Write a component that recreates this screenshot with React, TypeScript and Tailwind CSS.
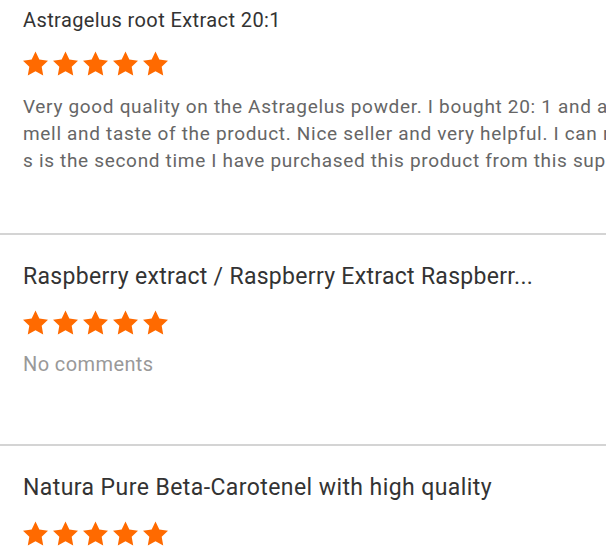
import React from "react";

type Review = {
  id: number;
  title: string;
  titleClass: string;
  lines: string[] | null;
};

const REVIEWS: Review[] = [
  {
    id: 1,
    title: "Astragelus root Extract 20:1",
    titleClass: "text-[20px] leading-[28px] tracking-[0.4px]",
    lines: [
      "Very good quality on the Astragelus powder. I bought 20: 1 and a very nice s",
      "mell and taste of the product. Nice seller and very helpful. I can recommend. Thi",
      "s is the second time I have purchased this product from this supplier.",
    ],
  },
  {
    id: 2,
    title: "Raspberry extract / Raspberry Extract Raspberr...",
    titleClass: "text-[23px] leading-[30px] tracking-[0.3px]",
    lines: null,
  },
  {
    id: 3,
    title: "Natura Pure Beta-Carotenel with high quality",
    titleClass: "text-[23px] leading-[30px] tracking-[0.42px]",
    lines: null,
  },
];

function Star() {
  return (
    <svg viewBox="0 0 24 24" className="h-[25px] w-[25px]" fill="#ff6a00">
      <path d="M12 .587l3.668 7.568 8.332 1.151-6.064 5.828 1.48 8.279L12 19.446l-7.417 3.967 1.481-8.279L0 9.306l8.332-1.151z" />
    </svg>
  );
}

function Stars() {
  return (
    <div className="flex gap-[5px]">
      {[0, 1, 2, 3, 4].map((i) => (
        <Star key={i} />
      ))}
    </div>
  );
}

export default function App() {
  return (
    <div
      className="h-[554px] w-[606px] overflow-hidden bg-white"
      style={{ fontFamily: "Roboto, 'Liberation Sans', sans-serif" }}
    >
      {REVIEWS.map((r, idx) => (
        <div
          key={r.id}
          className={
            idx === 0
              ? "h-[235px] border-b-2 border-[#d4d4d4] pl-[23px] pt-[6px]"
              : "h-[211px] border-b-2 border-[#d4d4d4] pl-[23px] pt-[26.5px]"
          }
        >
          <h3 className={`whitespace-nowrap text-[#333] ${r.titleClass}`}>{r.title}</h3>
          <div className={idx === 0 ? "mt-[17px]" : "mt-[18px]"}>
            <Stars />
          </div>
          {r.lines ? (
            <p className="mt-[17px] whitespace-nowrap text-[19px] leading-[27px] tracking-[0.68px] text-[#666]">
              {r.lines.map((l, i) => (
                <span key={i} className="block">
                  {l}
                </span>
              ))}
            </p>
          ) : (
            <p className="mt-[16px] text-[20px] leading-[27px] tracking-[0.4px] text-[#999]">
              No comments
            </p>
          )}
        </div>
      ))}
    </div>
  );
}
